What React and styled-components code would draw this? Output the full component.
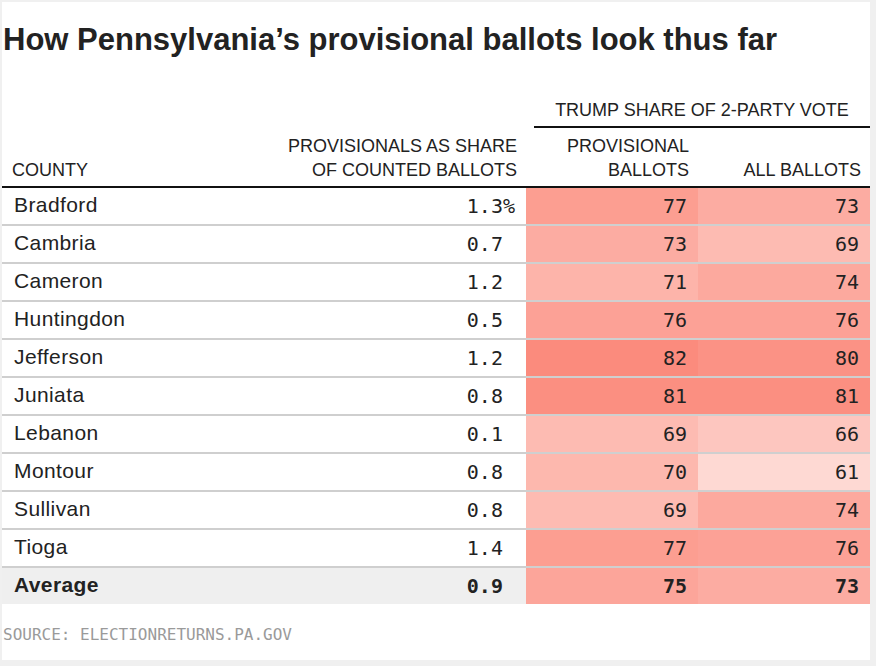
import React from "react";
import styled, { createGlobalStyle } from "styled-components";

const GlobalStyle = createGlobalStyle`
  html, body {
    margin: 0;
    padding: 0;
    background: #f0f0f0;
  }
  body {
    font-family: "Liberation Sans", Arial, sans-serif;
    color: #222;
  }
`;

const Frame = styled.div`
  margin: 2px 0 0 2px;
  width: 868px;
  height: 658px;
  background: #fff;
  display: flex;
  flex-direction: column;
`;

const Title = styled.h1`
  margin: 20px 0 0;
  padding-left: 1px;
  font-family: "Liberation Sans", Arial, sans-serif;
  font-size: 31px;
  line-height: 36px;
  font-weight: 700;
  color: #222;
`;

const Table = styled.div`
  margin-top: 40px;
  display: grid;
  grid-template-columns: 260px 264px 172px 172px;
`;

const GroupHead = styled.div`
  grid-column: 3 / span 2;
  grid-row: 1;
  margin-left: 8px;
  padding-bottom: 4px;
  border-bottom: 2px solid #111;
  text-align: center;
  font-size: 18px;
  line-height: 24px;
  text-transform: uppercase;
`;

const HeadCell = styled.div`
  grid-row: ${({ $span }) => ($span ? "1 / span 2" : "2")};
  align-self: end;
  height: ${({ $span }) => ($span ? "auto" : "54px")};
  display: flex;
  flex-direction: column;
  justify-content: flex-end;
  padding: ${({ $left }) => ($left ? "0 0 4px 10px" : "0 9px 4px 0")};
  text-align: ${({ $left }) => ($left ? "left" : "right")};
  font-size: 18px;
  line-height: 24px;
  text-transform: uppercase;
  border-bottom: 2px solid #111;
`;

const Cell = styled.div`
  height: 36px;
  box-sizing: border-box;
  display: flex;
  align-items: center;
  justify-content: ${({ $left }) => ($left ? "flex-start" : "flex-end")};
  padding: ${({ $left }) => ($left ? "0 0 3px 12px" : "0 11px 1px 0")};
  border-bottom: ${({ $last }) => ($last ? "none" : "2px solid #cfcfcf")};
  height: ${({ $last }) => ($last ? "36px" : "38px")};
  background: ${({ $bg }) => $bg || "#fff"};
  font-family: ${({ $left }) =>
    $left ? '"Liberation Sans", Arial, sans-serif' : '"DejaVu Sans Mono", monospace'};
  font-size: ${({ $left }) => ($left ? "21px" : "20px")};
  letter-spacing: ${({ $left }) => ($left ? "0.4px" : "0")};
  font-weight: ${({ $bold }) => ($bold ? 700 : 400)};
  color: #222;
`;

const Pct = styled.span`
  visibility: ${({ $hide }) => ($hide ? "hidden" : "visible")};
`;

const Source = styled.div`
  margin-top: 21px;
  padding-left: 1px;
  font-family: "DejaVu Sans Mono", monospace;
  font-size: 16px;
  line-height: 20px;
  color: #9a9a9a;
  text-transform: uppercase;
`;

const rows = [
  ["Bradford", "1.3", 77, 73],
  ["Cambria", "0.7", 73, 69],
  ["Cameron", "1.2", 71, 74],
  ["Huntingdon", "0.5", 76, 76],
  ["Jefferson", "1.2", 82, 80],
  ["Juniata", "0.8", 81, 81],
  ["Lebanon", "0.1", 69, 66],
  ["Montour", "0.8", 70, 61],
  ["Sullivan", "0.8", 69, 74],
  ["Tioga", "1.4", 77, 76],
];

// light pink at 61 -> salmon at 82
const shade = (v) => {
  const t = Math.max(0, Math.min(1, (v - 61) / 21));
  const r = Math.round(254 - 3 * t);
  const g = Math.round(217 - 78 * t);
  const b = Math.round(211 - 86 * t);
  return `rgb(${r}, ${g}, ${b})`;
};

const App = () => {
  return (
    <>
      <GlobalStyle />
      <Frame>
        <Title>How Pennsylvania’s provisional ballots look thus far</Title>
        <Table>
          <HeadCell $left $span style={{ gridColumn: 1 }}>
            County
          </HeadCell>
          <HeadCell $span style={{ gridColumn: 2 }}>
            <span>Provisionals as share</span>
            <span>of counted ballots</span>
          </HeadCell>
          <GroupHead>Trump share of 2-party vote</GroupHead>
          <HeadCell style={{ gridColumn: 3 }}>
            <span>Provisional</span>
            <span>ballots</span>
          </HeadCell>
          <HeadCell style={{ gridColumn: 4 }}>
            <span>All ballots</span>
          </HeadCell>

          {rows.map(([name, share, prov, all], i) => (
            <React.Fragment key={name}>
              <Cell $left>{name}</Cell>
              <Cell>
                {share}
                <Pct $hide={i !== 0}>%</Pct>
              </Cell>
              <Cell $bg={shade(prov)}>{prov}</Cell>
              <Cell $bg={shade(all)}>{all}</Cell>
            </React.Fragment>
          ))}

          <Cell $left $bold $last $bg="#efefef">
            Average
          </Cell>
          <Cell $bold $last $bg="#efefef">
            0.9<Pct $hide>%</Pct>
          </Cell>
          <Cell $bold $last $bg={shade(75)}>
            75
          </Cell>
          <Cell $bold $last $bg={shade(73)}>
            73
          </Cell>
        </Table>
        <Source>Source: electionreturns.pa.gov</Source>
      </Frame>
    </>
  );
};

export default App;
